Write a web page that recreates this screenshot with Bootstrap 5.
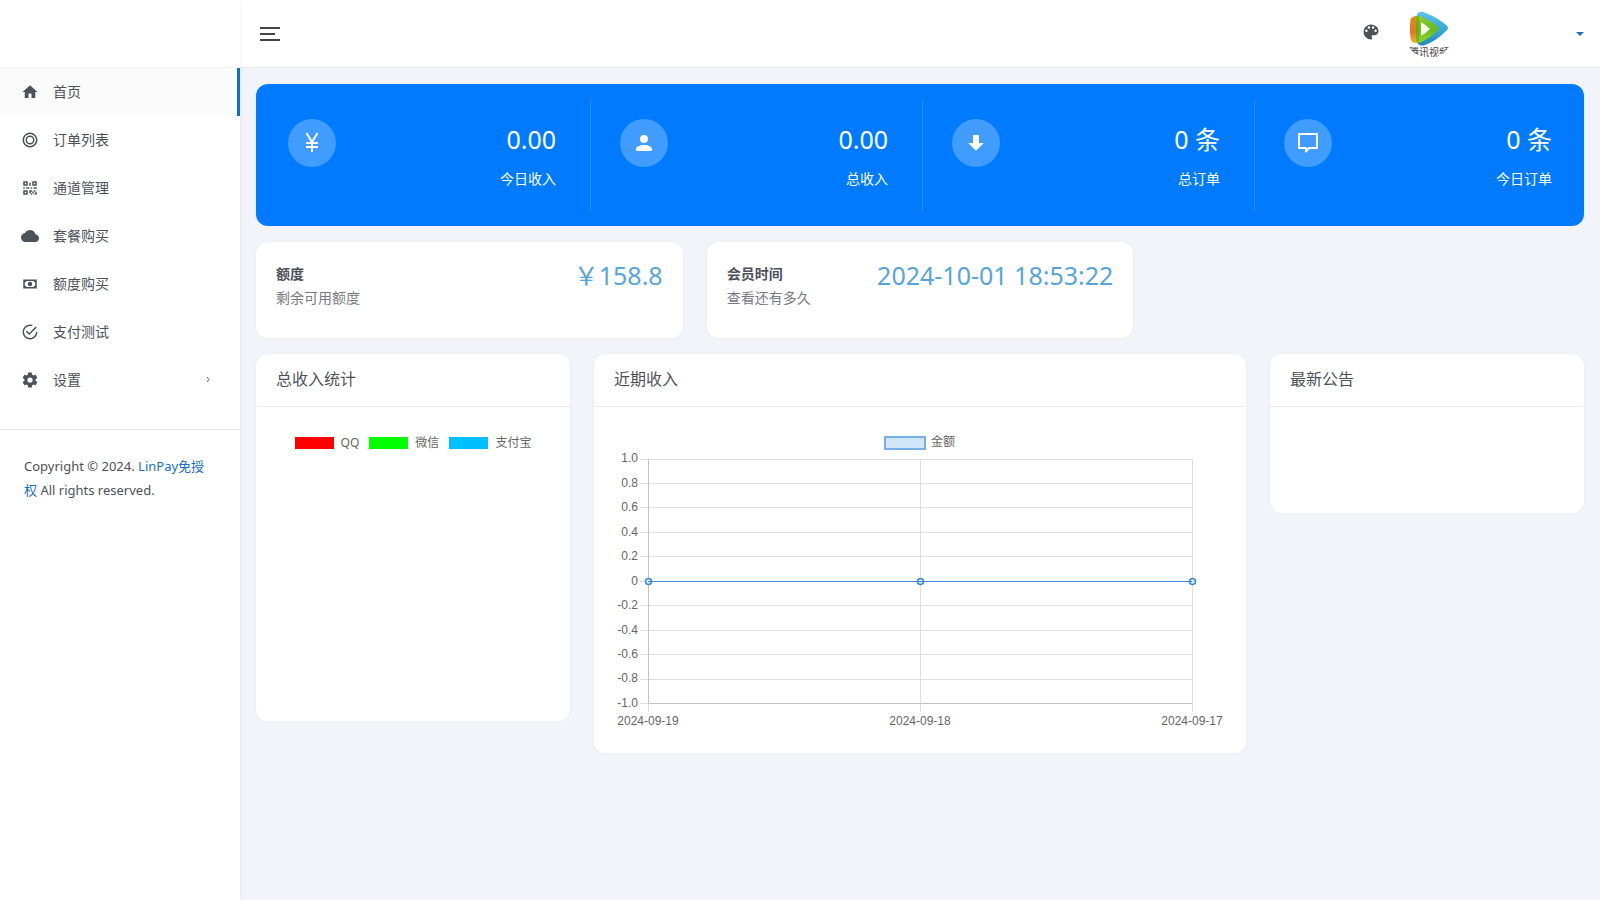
<!DOCTYPE html>
<html lang="zh-CN">
<head>
<meta charset="utf-8">
<meta name="viewport" content="width=device-width, initial-scale=1">
<title>LinPay - 首页</title>
<link href="https://cdn.jsdelivr.net/npm/bootstrap@5.3.0/dist/css/bootstrap.min.css" rel="stylesheet">
<style>
  body {
    font-family: "Noto Sans", "Noto Sans CJK SC", sans-serif;
    font-size: 14px;
    line-height: 24px;
    color: #4d5259;
    background: #f3f4fa;
  }
  .side {
    width: 240px;
    box-shadow: 0 0 4px rgba(0, 0, 0, .08);
    z-index: 2;
  }
  .bar { height: 68px; }
  .side-logo { border-bottom: 1px solid #f1f1f3; }
  .side-menu .nav-link {
    height: 48px;
    padding: 0 24px 0 21px;
    gap: 14px;
    color: #4d5259;
    border-right: 3px solid transparent;
  }
  .side-menu .nav-link.active {
    background: #fbfbfb;
    border-right-color: #0d6fd0;
  }
  .ico { width: 18px; height: 18px; fill: currentColor; flex: none; }
  .side-foot {
    margin-top: 25px;
    padding: 24px;
    border-top: 1px solid #e6e8eb;
    font-size: 13px;
  }
  .side-foot a { color: #1670c4; text-decoration: none; }
  .topbar {
    padding: 0 16px 0 20px;
    border-bottom: 1px solid #e6e7ec;
  }
  .topbar .btn { line-height: 0; color: #4d5259; }
  .theme-btn { margin-right: 24px; padding-bottom: 4px !important; }
  .user-menu { gap: 123px; }
  .user-menu.dropdown-toggle::after {
    margin: 0;
    border-width: 4px 4px 0;
    color: #1670c4;
  }
  .content { padding: 16px; }
  .panel {
    border: 0;
    border-radius: 12px;
    margin-bottom: 16px;
    color: inherit;
    box-shadow: 0 0 4px rgba(0, 0, 0, .04);
  }
  .panel .card-header {
    padding: 13px 20px 15px;
    font-size: 16px;
    background: none;
    border-bottom: 1px solid #ebecf0;
  }
  .panel .card-body { padding: 20px; }
  .totals { background: #007bff; color: #fff; }
  .total { padding: 35px 32px; height: 142px; }
  .total + .total::before {
    content: "";
    position: absolute;
    left: 2px;
    top: 15px;
    bottom: 15px;
    border-left: 1px solid rgba(255, 255, 255, .15);
  }
  .disc {
    width: 48px;
    height: 48px;
    background: rgba(255, 255, 255, .25);
  }
  .disc svg { width: 24px; height: 24px; fill: #fff; }
  .figure-lg { font-size: 25px; line-height: 40px; }
  .total-label { line-height: 40px; }
  .figure-lg.sky { color: #57a5da; line-height: 26px; }
  .soft { color: #777c84; }
  .mini { min-height: 56px; }
  .chart-key { font-size: 12px; line-height: 12px; gap: 10px; color: #666; padding: 10px 0; }
  .chart-key span { display: flex; align-items: center; gap: 7px; }
  .chart-key i { width: 39px; height: 12px; }
  .key-red { background: #f00; }
  .key-green { background: #0f0; }
  .key-blue { background: #00bfff; }
  .square { aspect-ratio: 1; }
  .chart text { font: 12px "Liberation Sans", "Noto Sans CJK SC", sans-serif; fill: #666; }
  .notice { min-height: 66px; }
</style>
</head>
<body>
<div class="d-flex min-vh-100">
  <aside class="side bg-white flex-shrink-0">
    <div class="bar side-logo"></div>
    <ul class="side-menu nav flex-column">
      <li><a class="nav-link active d-flex align-items-center" href="#">
        <svg class="ico" viewBox="0 0 24 24"><path d="M10 20v-6h4v6h5v-8h3L12 3 2 12h3v8z"/></svg>首页</a></li>
      <li><a class="nav-link d-flex align-items-center" href="#">
        <svg class="ico" viewBox="0 0 24 24"><g fill="none" stroke="currentColor" stroke-width="2"><circle cx="12" cy="12" r="9"/><circle cx="12" cy="12" r="5"/></g></svg>订单列表</a></li>
      <li><a class="nav-link d-flex align-items-center" href="#">
        <svg class="ico" viewBox="0 0 24 24"><path fill-rule="evenodd" d="M3 3h6v6H3zm2 2v2h2V5zM15 3h6v6h-6zm2 2v2h2V5zM3 15h6v6H3zm2 2v2h2v-2zM11 5h2v4h-2zM3 11h2v2H3zm4 0h4v2H7zm6 0h2v2h-2zm4 0h4v2h-4zM11 15h4v2h-2v2h-2zM17 15h2v2h-2zM15 17h2v2h-2zM19 17h2v4h-2zM13 19h2v2h-2zM17 19h1v2h-1z"/></svg>通道管理</a></li>
      <li><a class="nav-link d-flex align-items-center" href="#">
        <svg class="ico" viewBox="0 0 24 24"><path d="M19.35 10.04C18.67 6.59 15.64 4 12 4 9.11 4 6.6 5.64 5.35 8.04 2.34 8.36 0 10.91 0 14c0 3.31 2.69 6 6 6h13c2.76 0 5-2.24 5-5 0-2.64-2.05-4.78-4.65-4.96z"/></svg>套餐购买</a></li>
      <li><a class="nav-link d-flex align-items-center" href="#">
        <svg class="ico" viewBox="0 0 24 24"><path fill-rule="evenodd" d="M3 6h18v12H3zm4 2a2 2 0 0 1-2 2v4a2 2 0 0 1 2 2h10a2 2 0 0 1 2-2v-4a2 2 0 0 1-2-2zm5 1a3 3 0 1 1 0 6 3 3 0 0 1 0-6z"/></svg>额度购买</a></li>
      <li><a class="nav-link d-flex align-items-center" href="#">
        <svg class="ico" viewBox="0 0 24 24"><path d="M20 12a8 8 0 1 1-8-8c.76 0 1.5.11 2.2.31l1.57-1.57A9.8 9.8 0 0 0 12 2a10 10 0 1 0 10 10zM7.91 10.08 6.5 11.5 11 16 21 6l-1.41-1.42L11 13.17z"/></svg>支付测试</a></li>
      <li><a class="nav-link d-flex align-items-center" href="#">
        <svg class="ico" viewBox="0 0 24 24"><path d="M12 15.5A3.5 3.5 0 0 1 8.5 12 3.5 3.5 0 0 1 12 8.500a3.500 3.500 0 0 1 3.500 3.500 3.500 3.500 0 0 1-3.500 3.500m7.430-2.530c.04-.32.070-.640.070-.970s-.030-.660-.070-1l2.110-1.630c.190-.150.240-.420.120-.640l-2-3.460c-.120-.220-.390-.310-.610-.220l-2.490 1c-.520-.390-1.060-.730-1.690-.980l-.370-2.650A.506.506 0 0 0 14 2h-4c-.250 0-.460.180-.5.420l-.370 2.650c-.630.250-1.170.590-1.690.980l-2.490-1c-.220-.090-.490 0-.610.220l-2 3.460c-.130.220-.070.490.120.640L4.570 11c-.040.340-.070.670-.070 1s.030.650.070.970l-2.110 1.660c-.190.150-.250.420-.120.640l2 3.460c.120.220.390.300.610.220l2.490-1.010c.520.400 1.060.740 1.690.990l.370 2.650c.040.240.250.420.5.420h4c.250 0 .460-.180.5-.420l.370-2.650c.630-.260 1.170-.590 1.690-.990l2.490 1.010c.220.080.490 0 .610-.220l2-3.460c.120-.220.070-.490-.120-.640z"/></svg>设置
        <svg class="ms-auto" width="10" height="10" viewBox="0 0 10 10" fill="none" stroke="#666" stroke-width="1"><path d="M4 2l2 2.500-2 2.500"/></svg></a></li>
    </ul>
    <div class="side-foot">Copyright © 2024. <a href="#">LinPay免授权</a> All rights reserved.</div>
  </aside>

  <div class="flex-grow-1">
    <header class="bar topbar bg-white d-flex align-items-center">
      <button class="btn p-0 border-0" type="button" aria-label="菜单">
        <svg width="20" height="14" viewBox="0 0 20 14" fill="#444"><path d="M0 0h20v2H0zM0 6h15v2H0zM0 12h20v2H0z"/></svg>
      </button>
      <button class="btn p-0 border-0 ms-auto theme-btn" type="button" aria-label="主题">
        <svg width="20" height="20" viewBox="0 0 24 24" fill="currentColor"><path d="M17.500 12a1.500 1.500 0 1 1 0-3 1.500 1.500 0 0 1 0 3m-3-4a1.500 1.500 0 1 1 0-3 1.500 1.500 0 0 1 0 3m-5 0a1.500 1.500 0 1 1 0-3 1.500 1.500 0 0 1 0 3m-3 4a1.500 1.500 0 1 1 0-3 1.500 1.500 0 0 1 0 3M12 3a9 9 0 0 0 0 18 1.500 1.500 0 0 0 1.500-1.500c0-.390-.150-.740-.390-1-.230-.270-.380-.620-.380-1a1.500 1.500 0 0 1 1.500-1.500H16a5 5 0 0 0 5-5c0-4.420-4.030-8-9-8z"/></svg>
      </button>
      <button class="btn p-0 border-0 user-menu dropdown-toggle d-flex align-items-center" type="button" aria-label="用户">
        <svg width="48" height="48" viewBox="0 0 48 48">
          <defs>
            <clipPath id="round"><circle cx="24" cy="24" r="24"/></clipPath>
            <linearGradient id="gBlue" x1="0" y1="0" x2="0" y2="1"><stop offset="0" stop-color="#5cc4e6"/><stop offset=".6" stop-color="#36a5d2"/><stop offset="1" stop-color="#1f86b8"/></linearGradient>
            <linearGradient id="gOrange" x1="0" y1="0" x2="0" y2="1"><stop offset="0" stop-color="#e98a1c"/><stop offset=".6" stop-color="#f0701c"/><stop offset="1" stop-color="#f9b434"/></linearGradient>
            <linearGradient id="gGreen" x1="0" y1="0" x2="0" y2="1"><stop offset="0" stop-color="#8fd02c"/><stop offset=".5" stop-color="#6cb81c"/><stop offset="1" stop-color="#8fd628"/></linearGradient>
          </defs>
          <g clip-path="url(#round)">
            <path fill="url(#gBlue)" d="M12 5q1-4 6-3 12 4 22 12 6 4 0 8-9 9-20 13-6 2-8-3z"/>
            <path fill="url(#gOrange)" d="M6 8q5-3 7-2v27q-2 1-6-1-2-2-2-13 0-9 1-11z"/>
            <path fill="url(#gGreen)" d="M11 6q2-1 6 1 9 4 15 9 3 3 0 5-7 7-15 11-4 1-6 0-1-13 0-26z"/>
            <path fill="#5a8f16" opacity=".4" d="M11 6h3v26h-3z"/>
            <path fill="#f4f7ea" d="M16 12q5 3 9 7-4 4-9 7z"/>
            <text x="4" y="46" font-size="10" fill="#444">腾讯视频</text>
          </g>
        </svg>
      </button>
    </header>

    <main class="content">
      <section class="panel totals">
        <div class="row g-0">
          <div class="col-3 total position-relative d-flex justify-content-between">
            <div class="disc rounded-circle d-flex align-items-center justify-content-center"><svg viewBox="0 0 24 24"><path fill="none" stroke="#fff" stroke-width="2" d="M6.500 2l5.500 9 5.500-9M12 10v11M6 12h12M6 16h12"/></svg></div>
            <div class="text-end"><div class="figure-lg">0.00</div><div class="total-label">今日收入</div></div>
          </div>
          <div class="col-3 total position-relative d-flex justify-content-between">
            <div class="disc rounded-circle d-flex align-items-center justify-content-center"><svg viewBox="0 0 24 24"><path d="M12 4a4 4 0 1 1 0 8 4 4 0 0 1 0-8m0 10c4.420 0 8 1.790 8 4v2H4v-2c0-2.210 3.580-4 8-4z"/></svg></div>
            <div class="text-end"><div class="figure-lg">0.00</div><div class="total-label">总收入</div></div>
          </div>
          <div class="col-3 total position-relative d-flex justify-content-between">
            <div class="disc rounded-circle d-flex align-items-center justify-content-center"><svg viewBox="0 0 24 24"><path d="M9 4h6v8h4.840L12 19.840 4.160 12H9z"/></svg></div>
            <div class="text-end"><div class="figure-lg">0 条</div><div class="total-label">总订单</div></div>
          </div>
          <div class="col-3 total position-relative d-flex justify-content-between">
            <div class="disc rounded-circle d-flex align-items-center justify-content-center"><svg viewBox="0 0 24 24"><path fill="none" stroke="#fff" stroke-width="2" stroke-linejoin="round" d="M3 3h18v14h-8l-3 3.500V17H3z"/></svg></div>
            <div class="text-end"><div class="figure-lg">0 条</div><div class="total-label">今日订单</div></div>
          </div>
        </div>
      </section>

      <div class="row">
        <div class="col-4">
          <div class="card panel"><div class="card-body">
            <div class="mini d-flex justify-content-between">
              <div><div class="fw-bold">额度</div><div class="soft">剩余可用额度</div></div>
              <div class="figure-lg sky">￥158.8</div>
            </div>
          </div></div>
        </div>
        <div class="col-4">
          <div class="card panel"><div class="card-body">
            <div class="mini d-flex justify-content-between">
              <div><div class="fw-bold">会员时间</div><div class="soft">查看还有多久</div></div>
              <div class="figure-lg sky">2024-10-01 18:53:22</div>
            </div>
          </div></div>
        </div>
      </div>

      <div class="row align-items-start">
        <div class="col-3">
          <div class="card panel">
            <div class="card-header">总收入统计</div>
            <div class="card-body">
              <div class="square">
                <div class="chart-key d-flex justify-content-center">
                  <span><i class="key-red"></i>QQ</span>
                  <span><i class="key-green"></i>微信</span>
                  <span><i class="key-blue"></i>支付宝</span>
                </div>
              </div>
            </div>
          </div>
        </div>
        <div class="col-6">
          <div class="card panel">
            <div class="card-header">近期收入</div>
            <div class="card-body">
              <svg class="chart d-block w-100" viewBox="0 0 612 306">
                <rect x="271" y="10" width="40" height="12" fill="#cfe5f8" stroke="#78b0e6" stroke-width="2"/>
                <text x="317" y="19">金额</text>
                <path stroke="#dfdfdf" d="M26 32.500h553M26 56.500h553M26 80.500h553M26 105.500h553M26 129.500h553M26 154.500h553M26 178.500h553M26 203.500h553M26 227.500h553M26 252.500h553M26 276.500h8M306.500 32v253M578.500 32v253M34.500 276v9"/>
                <path stroke="#c4c4c4" fill="none" d="M34.500 32v244.500h544"/>
                <g text-anchor="end">
                  <text x="24" y="35">1.0</text>
                  <text x="24" y="60">0.8</text>
                  <text x="24" y="84">0.6</text>
                  <text x="24" y="109">0.4</text>
                  <text x="24" y="133">0.2</text>
                  <text x="24" y="158">0</text>
                  <text x="24" y="182">-0.2</text>
                  <text x="24" y="207">-0.4</text>
                  <text x="24" y="231">-0.6</text>
                  <text x="24" y="255">-0.8</text>
                  <text x="24" y="280">-1.0</text>
                </g>
                <g text-anchor="middle">
                  <text x="34" y="298">2024-09-19</text>
                  <text x="306" y="298">2024-09-18</text>
                  <text x="578" y="298">2024-09-17</text>
                </g>
                <g stroke="#3f8cd0" fill="#cfe5f8">
                  <g stroke-width="1.500"><circle cx="34.500" cy="154.500" r="3"/><circle cx="306.500" cy="154.500" r="3"/><circle cx="578.500" cy="154.500" r="3"/></g>
                  <path d="M34 154.500h544"/>
                </g>
              </svg>
            </div>
          </div>
        </div>
        <div class="col-3">
          <div class="card panel">
            <div class="card-header">最新公告</div>
            <div class="card-body"><div class="notice"></div></div>
          </div>
        </div>
      </div>
    </main>
  </div>
</div>
<script src="https://cdn.jsdelivr.net/npm/bootstrap@5.3.0/dist/js/bootstrap.bundle.min.js"></script>
</body>
</html>
